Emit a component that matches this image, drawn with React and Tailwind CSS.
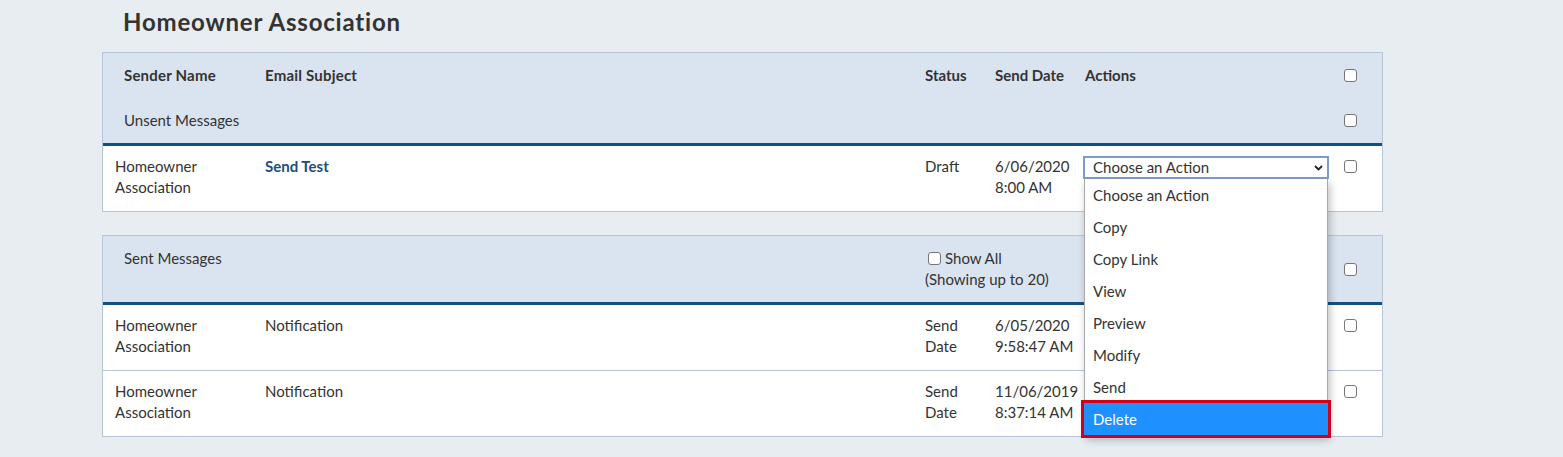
import React from "react";

const F = { fontFamily: "Lato, 'Open Sans', sans-serif" };

function Box() {
  return (
    <span className="block w-[13px] h-[13px] rounded-[3px] border border-[#767676] bg-white shrink-0" />
  );
}

const grid = "grid grid-cols-[150px_660px_70px_90px_259px_1fr]";

function Row({ subject, subjectBold, status, date, actions, last }) {
  return (
    <div className={`${grid} ${last ? "h-[65px]" : "h-[66px] border-b border-[#b6c5d8]"} bg-white`}>
      <div className="pl-[12px] pt-[10px] leading-[21px]">
        <div>Homeowner</div>
        <div>Association</div>
      </div>
      <div className={`pl-[12px] pt-[10px] leading-[21px] ${subjectBold ? "font-bold text-[#1d4f7d]" : ""}`}>{subject}</div>
      <div className="pl-[12px] pt-[10px] leading-[21px]">
        {status.map((s) => (
          <div key={s}>{s}</div>
        ))}
      </div>
      <div className="pl-[12px] pt-[10px] leading-[21px] whitespace-nowrap">
        {date.map((s) => (
          <div key={s}>{s}</div>
        ))}
      </div>
      <div className="pl-[10px] pt-[10px] relative">{actions}</div>
      <div className="pl-[12px] pt-[14px] flex items-start">
        <Box />
      </div>
    </div>
  );
}

function ActionSelect() {
  const items = ["Choose an Action", "Copy", "Copy Link", "View", "Preview", "Modify", "Send"];
  return (
    <div className="relative w-[246px]">
      <div className="h-[23px] border-2 border-[#7f9dc4] bg-white flex items-center justify-between pl-[8px] pr-[4px] leading-[19px]">
        <span>Choose an Action</span>
        <svg width="9" height="6" viewBox="0 0 9 6" className="mt-[1px]">
          <path d="M1 1 L4.5 4.5 L8 1" fill="none" stroke="#222" strokeWidth="1.8" />
        </svg>
      </div>
      <div className="absolute left-[1px] top-[23px] w-[244px] bg-white border-x border-b border-[#a9a9a9] shadow-[2px_4px_8px_rgba(0,0,0,0.25)] z-10">
        {items.map((it) => (
          <div key={it} className="h-[32px] flex items-center pl-[8px]">
            {it}
          </div>
        ))}
        <div className="relative h-[32px] -mx-[1px] outline-[3px] outline-solid outline-[#d0021b] bg-[#1e90ff] text-white flex items-center pl-[9px]">
          Delete
        </div>
      </div>
    </div>
  );
}

export default function App() {
  return (
    <div className="min-h-[457px] bg-[#e8edf2] text-[#333] text-[15px]" style={F}>
      <div className="pl-[102px] w-[1383px]">
        <div className="h-[52px] pl-[21px] pt-[6px]">
          <h1 className="text-[24px] font-bold tracking-[0.8px] text-[#333] leading-[32px]">Homeowner Association</h1>
        </div>

        <div className="border border-[#b6c5d8]">
          <div className="bg-[#dae4f0] border-b-[3px] border-[#13507f]">
            <div className={`${grid} h-[45px] items-center font-bold`}>
              <div className="pl-[21px] tracking-[0.2px]">Sender Name</div>
              <div className="pl-[12px] tracking-[0.2px]">Email Subject</div>
              <div className="pl-[12px]">Status</div>
              <div className="pl-[12px]">Send Date</div>
              <div className="pl-[12px]">Actions</div>
              <div className="pl-[12px] flex"><Box /></div>
            </div>
            <div className={`${grid} h-[45px] items-center`}>
              <div className="pl-[21px] col-span-5">Unsent Messages</div>
              <div className="pl-[12px] flex"><Box /></div>
            </div>
          </div>
          <Row
            subject="Send Test"
            subjectBold
            status={["Draft"]}
            date={["6/06/2020", "8:00 AM"]}
            actions={<ActionSelect />}
            last
          />
        </div>

        <div className="border border-[#b6c5d8] mt-[23px]">
          <div className={`${grid} h-[69px] bg-[#dae4f0] border-b-[3px] border-[#13507f]`}>
            <div className="pl-[21px] pt-[12px] leading-[21px] col-span-2">Sent Messages</div>
            <div className="pl-[12px] pt-[12px] leading-[21px] col-span-2 whitespace-nowrap">
              <div className="flex items-center gap-[4px] pl-[3px]">
                <Box />
                <span>Show All</span>
              </div>
              <div>(Showing up to 20)</div>
            </div>
            <div />
            <div className="pl-[12px] flex items-center"><Box /></div>
          </div>
          <Row
            subject="Notification"
            status={["Send", "Date"]}
            date={["6/05/2020", "9:58:47 AM"]}
            actions={null}
          />
          <Row
            subject="Notification"
            status={["Send", "Date"]}
            date={["11/06/2019", "8:37:14 AM"]}
            actions={null}
            last
          />
        </div>
      </div>
    </div>
  );
}
